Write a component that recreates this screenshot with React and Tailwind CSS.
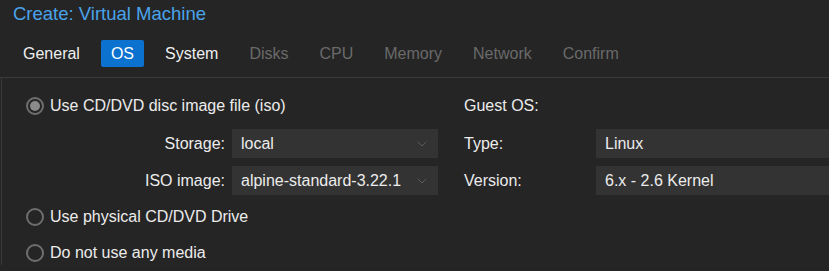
import { ChevronDown } from 'lucide-react';

const TABS = [
  { label: 'General' },
  { label: 'OS', active: true },
  { label: 'System' },
  { label: 'Disks', disabled: true },
  { label: 'CPU', disabled: true },
  { label: 'Memory', disabled: true },
  { label: 'Network', disabled: true },
  { label: 'Confirm', disabled: true },
];

function Radio({ checked, label }) {
  return (
    <div className="flex items-center gap-[6px] h-[24px]">
      <span className="w-[18px] h-[18px] rounded-full border-2 border-[#6e6e6e] flex items-center justify-center">
        {checked && <span className="w-[10px] h-[10px] rounded-full bg-[#8a8a8a]" />}
      </span>
      <span className="text-[16px] text-[#ececec]">{label}</span>
    </div>
  );
}

function Select({ value }) {
  return (
    <div className="w-[206px] h-[29px] bg-[#333333] flex items-center justify-between pl-[9px] pr-[8px]">
      <span className="text-[16px] text-[#ececec] whitespace-nowrap">{value}</span>
      <ChevronDown className="w-4 h-4 shrink-0 text-[#5c5c5c]" strokeWidth={1.5} />
    </div>
  );
}

export default function App() {
  return (
    <div
      className="w-[829px] h-[271px] bg-[#252525] overflow-hidden"
      style={{ fontFamily: '"Liberation Sans", Arial, sans-serif' }}
    >
      {/* header */}
      <div className="h-[32px] pl-[13px] pt-[2px] text-[18.5px] leading-[24px] text-[#4aa3ea]">Create: Virtual Machine</div>

      {/* tabs */}
      <div className="h-[46px] flex items-center pl-[13px] pb-[2px] border-b border-[#3a3a3a]">
        {TABS.map((t) => (
          <div
            key={t.label}
            className={`h-[27px] px-[10px] mr-[11px] flex items-center text-[16px] rounded-[2px] ${
              t.active ? 'bg-[#0b72d0] text-white' : t.disabled ? 'text-[#6a6a6a]' : 'text-[#f0f0f0]'
            }`}
          >
            {t.label}
          </div>
        ))}
      </div>

      {/* body */}
      <div className="ml-[1px] border-l border-[#383838] flex pt-[16px]">
        <div className="w-[437px] pl-[24px] flex flex-col">
          <Radio checked label="Use CD/DVD disc image file (iso)" />
          <div className="flex flex-col gap-[8px] mt-[11px]">
            <div className="flex items-center">
              <span className="w-[206px] text-right pr-[7px] text-[16px] text-[#ececec]">Storage:</span>
              <Select value="local" />
            </div>
            <div className="flex items-center">
              <span className="w-[206px] text-right pr-[7px] text-[16px] text-[#ececec]">ISO image:</span>
              <Select value="alpine-standard-3.22.1" />
            </div>
          </div>
          <div className="mt-[10px] flex flex-col gap-[12px]">
            <Radio label="Use physical CD/DVD Drive" />
            <Radio label="Do not use any media" />
          </div>
        </div>

        <div className="flex-1 pl-[25px] flex flex-col">
          <div className="h-[24px] flex items-center text-[16px] text-[#ececec]">Guest OS:</div>
          <div className="flex flex-col gap-[8px] mt-[11px]">
            <div className="flex items-center">
              <span className="w-[132px] text-[16px] text-[#ececec]">Type:</span>
              <div className="flex-1 h-[29px] bg-[#333333] flex items-center pl-[9px] text-[16px] text-[#ececec]">Linux</div>
            </div>
            <div className="flex items-center">
              <span className="w-[132px] text-[16px] text-[#ececec]">Version:</span>
              <div className="flex-1 h-[29px] bg-[#333333] flex items-center pl-[9px] text-[16px] text-[#ececec]">6.x - 2.6 Kernel</div>
            </div>
          </div>
        </div>
      </div>
    </div>
  );
}
